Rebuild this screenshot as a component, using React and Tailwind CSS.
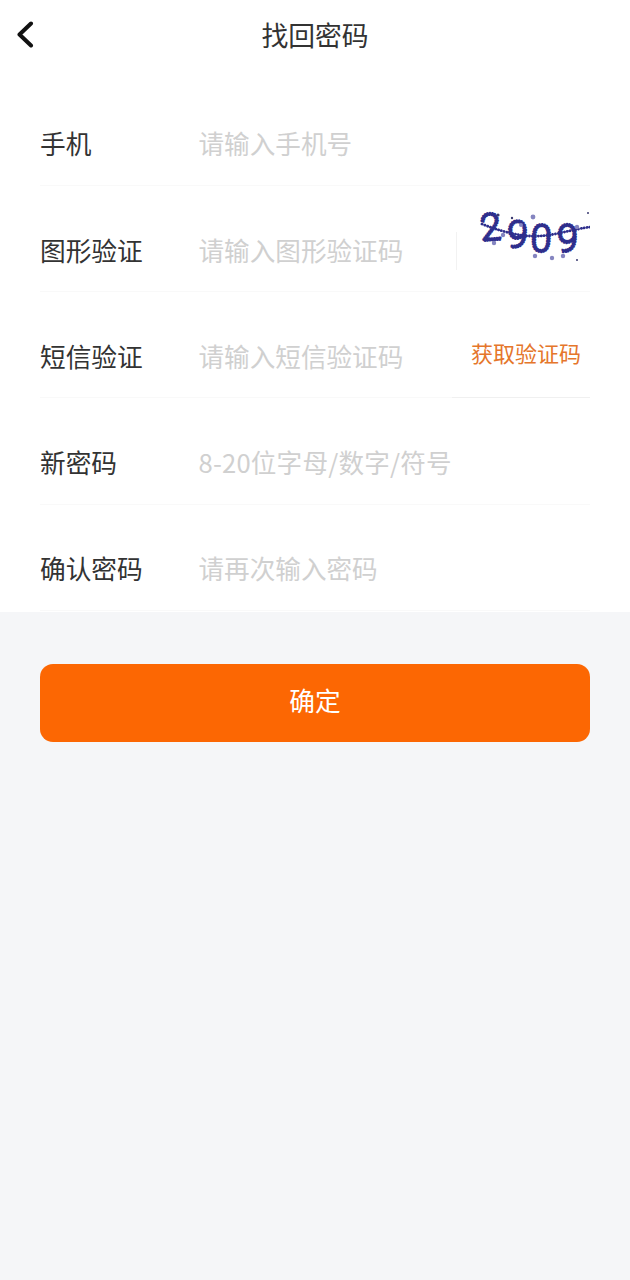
import React from "react";

const fields = [
  { label: "手机", placeholder: "请输入手机号" },
  { label: "图形验证", placeholder: "请输入图形验证码", extra: "captcha" },
  { label: "短信验证", placeholder: "请输入短信验证码", extra: "sms" },
  { label: "新密码", placeholder: "8-20位字母/数字/符号", wide: true },
  { label: "确认密码", placeholder: "请再次输入密码" },
];

const captchaDigits = [
  { d: "2", x: 25, y: 34, rot: -4 },
  { d: "9", x: 50, y: 40, rot: 4 },
  { d: "0", x: 74, y: 44, rot: 3 },
  { d: "9", x: 101, y: 45, rot: 0 },
];

const captchaDots = [
  [79, 49, 2.2], [96, 51, 2.2], [107, 49, 2.2], [121, 53, 1], [132, 6, 1], [77, 10, 2.4],
  [38, 36, 2.2], [47, 28, 2.2], [56, 11, 1.2], [42, 8, 1.6], [65, 18, 2], [121, 20, 2.2],
];

function Captcha() {
  return (
    <svg width="134" height="82" viewBox="0 -20 134 82" className="shrink-0">
      {captchaDigits.map((g, i) => (
        <text
          key={i}
          transform={`translate(${g.x} ${g.y}) rotate(${g.rot})`}
          fontFamily="Roboto, sans-serif"
          fontWeight="300"
          fontSize="38"
          fill="#2e2e8c"
          stroke="#2e2e8c"
          strokeWidth="2.4"
          strokeLinecap="round"
          strokeDasharray="0.1 2.4"
        >
          {g.d}
        </text>
      ))}
      <path
        d="M26 17 Q46 25 64 28 T104 26 T134 20"
        fill="none"
        stroke="#2e2e8c"
        strokeWidth="2.8"
        strokeLinecap="round"
        strokeDasharray="0.1 2.8"
      />
      {captchaDots.map(([cx, cy, r], i) => (
        <circle key={i} cx={cx} cy={cy} r={r} fill={r > 1.6 ? "#8585c0" : "#3a3a70"} />
      ))}
    </svg>
  );
}

function Row({ field }) {
  return (
    <div className="relative flex h-[106.25px] items-end border-b border-[#f9f9f9] pb-[26.5px]">
      <span className="w-[158.5px] shrink-0 text-[25.7px] leading-[30px] text-[#333333]">{field.label}</span>
      <span className={`text-[25.6px] leading-[30px] text-[#d0d0d0] ${field.wide ? "tracking-[0.2px]" : ""}`}>
        {field.placeholder}
      </span>
      {field.extra === "captcha" && (
        <div className="absolute top-[1px] right-0 flex w-[134px] items-center">
          <div className="absolute top-[45px] left-0 h-[38px] w-px bg-[#f2f2f2]" />
          <Captcha />
        </div>
      )}
      {field.extra === "sms" && (
        <>
          <div className="absolute right-[9px] bottom-[30.5px] text-[22px] leading-[30px] text-[#e5762b]">获取验证码</div>
          <div className="absolute right-0 bottom-[-1px] h-px w-[138px] bg-[#f0f0f0]" />
        </>
      )}
    </div>
  );
}

export default function App() {
  return (
    <div className="flex h-[1280px] w-[630px] flex-col overflow-hidden bg-[#f5f6f8] font-['Noto_Sans_CJK_SC','Noto_Sans',sans-serif]">
      <div className="bg-white pb-[1px]">
        <div className="relative flex h-[79.5px] items-start justify-center pt-[16px]">
          <svg
            className="absolute top-[21px] left-[16px]"
            width="18"
            height="27"
            viewBox="0 0 18 27"
            fill="none"
            stroke="#111111"
            strokeWidth="4"
            strokeLinecap="round"
            strokeLinejoin="round"
          >
            <path d="M15 2.5 L3.5 13.5 L15 24.5" />
          </svg>
          <h1 className="text-[26.8px] leading-[38px] font-normal text-[#333333]">找回密码</h1>
        </div>
        <div className="mx-[40px]">
          {fields.map((f) => (
            <Row key={f.label} field={f} />
          ))}
        </div>
      </div>
      <button className="mx-[40px] mt-[52.5px] flex h-[78px] items-center justify-center rounded-[13px] bg-[#fc6703] pb-[6px] text-[25.7px] text-white">
        确定
      </button>
    </div>
  );
}
